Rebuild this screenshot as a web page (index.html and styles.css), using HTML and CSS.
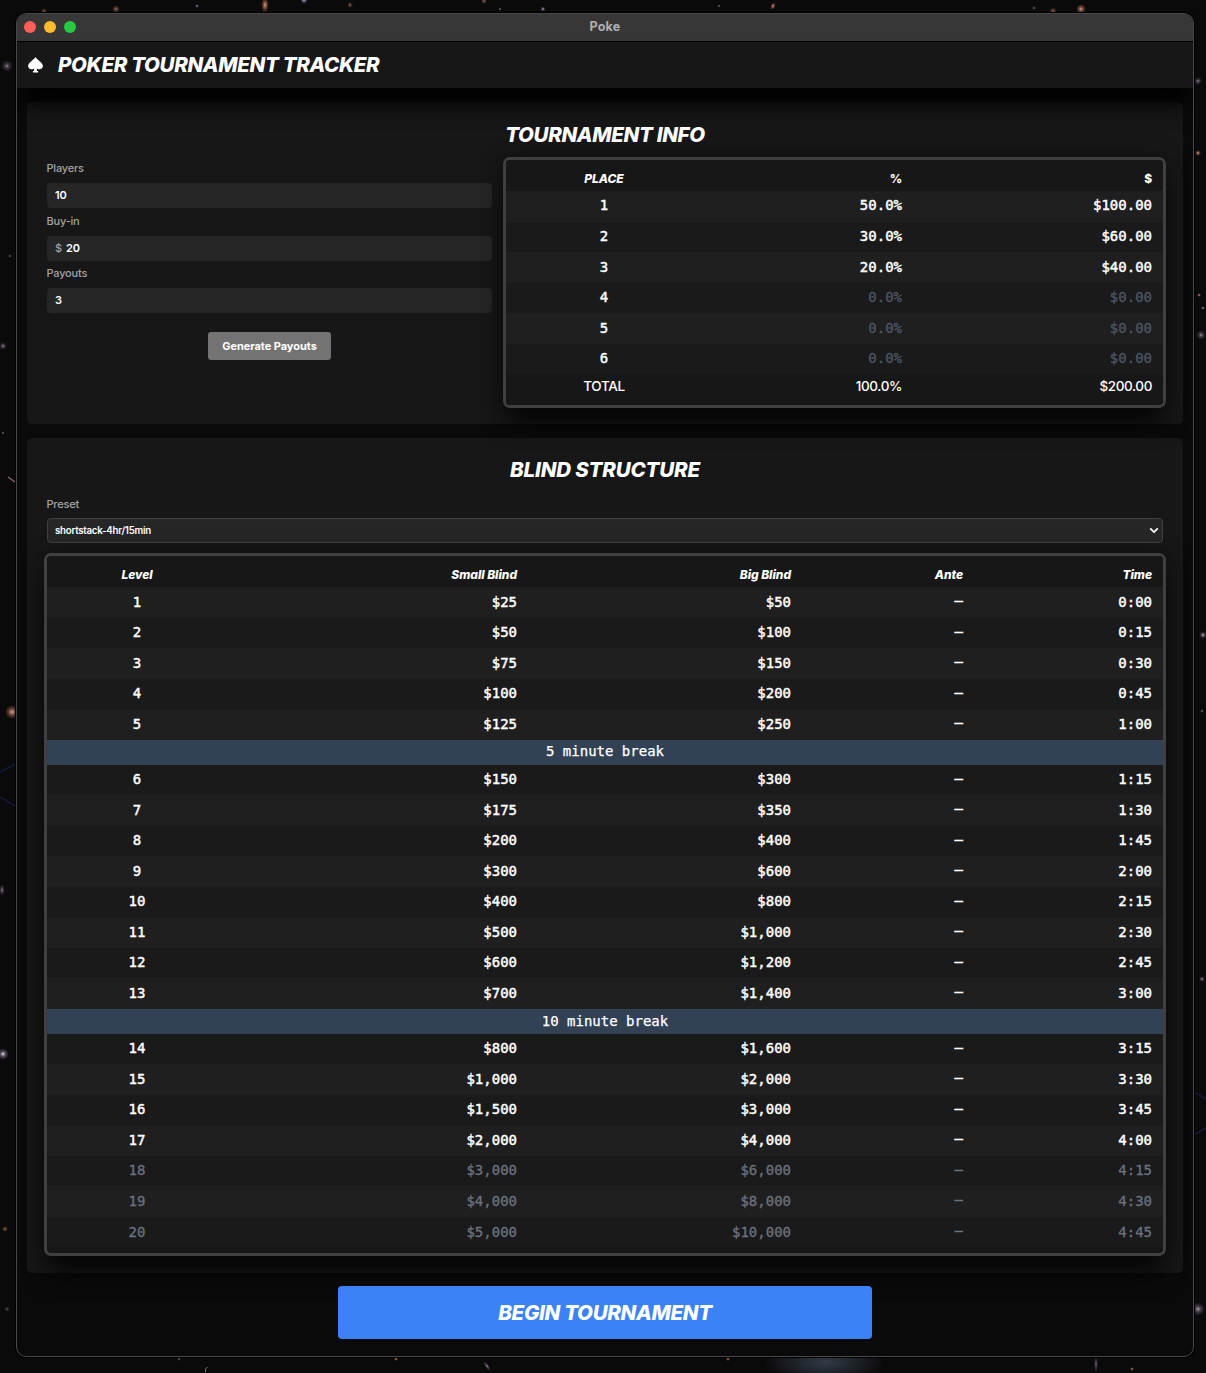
FILE: index.html
```html
<!DOCTYPE html>
<html lang="en">
<head>
<meta charset="utf-8">
<title>Poke</title>
<link rel="stylesheet" href="styles.css">
</head>
<body>
<svg class="stars" width="1206" height="1373" viewBox="0 0 1206 1373" aria-hidden="true">
  <defs>
    <radialGradient id="nebula"><stop offset="0" stop-color="#3a4856" stop-opacity=".8"/><stop offset="1" stop-color="#3a4856" stop-opacity="0"/></radialGradient>
    <radialGradient id="glow"><stop offset="0" stop-color="#fff"/><stop offset=".3" stop-color="#a08aa5" stop-opacity=".7"/><stop offset="1" stop-color="#604a70" stop-opacity="0"/></radialGradient>
    <radialGradient id="warm"><stop offset="0" stop-color="#d9a58c"/><stop offset=".4" stop-color="#8d5a48" stop-opacity=".8"/><stop offset="1" stop-color="#70402c" stop-opacity="0"/></radialGradient>
  </defs>
  <ellipse cx="825" cy="1362" rx="60" ry="22" fill="url(#nebula)"/>
  <g fill="url(#glow)">
    <circle cx="7" cy="66" r="6" opacity=".55"/><circle cx="3" cy="346" r="4" opacity=".6"/><circle cx="197" cy="6" r="2"/>
    <circle cx="3" cy="1054" r="6"/><circle cx="1198" cy="1309" r="7" opacity=".7"/><circle cx="1203" cy="635" r="4" opacity=".8"/>
    <ellipse cx="2" cy="890" rx="3" ry="6" opacity=".6"/><ellipse cx="487" cy="1366" rx="2" ry="6" transform="rotate(-35 487 1366)" opacity=".7"/>
    <ellipse cx="1096" cy="1364" rx="2" ry="9" opacity=".6"/><circle cx="304" cy="0" r="4"/><circle cx="1203" cy="308" r="2"/>
    <circle cx="1198" cy="81" r="4" opacity=".6"/><circle cx="1201" cy="335" r="5" opacity=".6"/>
    <circle cx="543" cy="9" r="2.500"/><circle cx="500" cy="9" r="1.500"/><circle cx="719" cy="6" r="1.500"/><circle cx="1034" cy="8" r="2" opacity=".7"/>
    <circle cx="3" cy="433" r="1.500"/><circle cx="1202" cy="979" r="3" opacity=".7"/><circle cx="1202" cy="711" r="2" opacity=".7"/>
    <circle cx="179" cy="1359" r="2" opacity=".7"/><circle cx="7" cy="1309" r="3" opacity=".4"/><circle cx="10" cy="256" r="2" opacity=".6"/>
  </g>
  <g fill="url(#warm)">
    <ellipse cx="265" cy="5" rx="4" ry="8"/><circle cx="12" cy="712" r="7"/><circle cx="116" cy="9" r="4" opacity=".7"/>
    <circle cx="1081" cy="9" r="5"/><circle cx="1053" cy="11" r="4" opacity=".6"/><circle cx="1198" cy="153" r="3"/>
    <circle cx="350" cy="5" r="3" opacity=".6"/><circle cx="1199" cy="295" r="2"/><circle cx="44" cy="11" r="3" opacity=".6"/>
    <ellipse cx="773" cy="6" rx="2.500" ry="4" transform="rotate(25 773 6)"/><circle cx="484" cy="1" r="3" opacity=".7"/>
    <circle cx="396" cy="1359" r="2"/><circle cx="728" cy="1359" r="2"/><circle cx="5" cy="1229" r="3" opacity=".7"/><circle cx="1132" cy="1369" r="2"/>
  </g>
  <path d="M0 772l15-8M0 797l15 9M1196 1093l10 6M1196 1134l10-6" stroke="#15193d" stroke-width="1.500"/>
  <path d="M8 477l7 5" stroke="#8d6670" stroke-width="1.200"/>
  <path d="M205.500 1372v-3l2-2" stroke="#777" fill="none"/>
</svg>
<main class="window">
  <div class="titlebar">
    <span class="light red"></span><span class="light yellow"></span><span class="light green"></span>
    <span class="window-name">Poke</span>
  </div>
  <header class="app-header">
    <svg class="spade" width="16" height="16" viewBox="0 0 16 16" aria-hidden="true"><path d="M7.500 0C6.300 2.800.1 5.300.1 9.100c0 3 3.700 4.300 6 2.300v2.600H4.900v1.500h5.200V14H8.900v-2.600c2.300 2 6 .7 6-2.300C14.900 5.300 8.700 2.800 7.500 0z" fill="#fff"/></svg>
    <h1>POKER TOURNAMENT TRACKER</h1>
  </header>

  <section class="card info">
    <h2>TOURNAMENT INFO</h2>
    <div class="info-body">
      <div class="form">
        <label>Players</label><div class="field">10</div>
        <label>Buy-in</label><div class="field"><span class="unit">$</span>20</div>
        <label>Payouts</label><div class="field">3</div>
        <button class="generate">Generate Payouts</button>
      </div>
      <div class="grid payouts">
        <div class="row head"><span>PLACE</span><span>%</span><span>$</span></div>
        <div class="row odd"><span>1</span><span>50.0%</span><span>$100.00</span></div>
        <div class="row"><span>2</span><span>30.0%</span><span>$60.00</span></div>
        <div class="row odd"><span>3</span><span>20.0%</span><span>$40.00</span></div>
        <div class="row unpaid"><span>4</span><span>0.0%</span><span>$0.00</span></div>
        <div class="row odd unpaid"><span>5</span><span>0.0%</span><span>$0.00</span></div>
        <div class="row unpaid"><span>6</span><span>0.0%</span><span>$0.00</span></div>
        <div class="row total"><span>TOTAL</span><span>100.0%</span><span>$200.00</span></div>
      </div>
    </div>
  </section>

  <section class="card blinds">
    <h2>BLIND STRUCTURE</h2>
    <label>Preset</label>
    <div class="field select">shortstack-4hr/15min<svg width="10" height="7" viewBox="0 0 10 7" aria-hidden="true"><path d="M1.200 1.300L5 5l3.800-3.700" fill="none" stroke="#fff" stroke-width="1.700"/></svg></div>
    <div class="grid levels">
      <div class="row head"><span>Level</span><span>Small Blind</span><span>Big Blind</span><span>Ante</span><span>Time</span></div>
      <div class="row odd"><span>1</span><span>$25</span><span>$50</span><span>–</span><span>0:00</span></div>
      <div class="row"><span>2</span><span>$50</span><span>$100</span><span>–</span><span>0:15</span></div>
      <div class="row odd"><span>3</span><span>$75</span><span>$150</span><span>–</span><span>0:30</span></div>
      <div class="row"><span>4</span><span>$100</span><span>$200</span><span>–</span><span>0:45</span></div>
      <div class="row odd"><span>5</span><span>$125</span><span>$250</span><span>–</span><span>1:00</span></div>
      <div class="break">5 minute break</div>
      <div class="row"><span>6</span><span>$150</span><span>$300</span><span>–</span><span>1:15</span></div>
      <div class="row odd"><span>7</span><span>$175</span><span>$350</span><span>–</span><span>1:30</span></div>
      <div class="row"><span>8</span><span>$200</span><span>$400</span><span>–</span><span>1:45</span></div>
      <div class="row odd"><span>9</span><span>$300</span><span>$600</span><span>–</span><span>2:00</span></div>
      <div class="row"><span>10</span><span>$400</span><span>$800</span><span>–</span><span>2:15</span></div>
      <div class="row odd"><span>11</span><span>$500</span><span>$1,000</span><span>–</span><span>2:30</span></div>
      <div class="row"><span>12</span><span>$600</span><span>$1,200</span><span>–</span><span>2:45</span></div>
      <div class="row odd"><span>13</span><span>$700</span><span>$1,400</span><span>–</span><span>3:00</span></div>
      <div class="break long">10 minute break</div>
      <div class="row"><span>14</span><span>$800</span><span>$1,600</span><span>–</span><span>3:15</span></div>
      <div class="row odd"><span>15</span><span>$1,000</span><span>$2,000</span><span>–</span><span>3:30</span></div>
      <div class="row"><span>16</span><span>$1,500</span><span>$3,000</span><span>–</span><span>3:45</span></div>
      <div class="row odd"><span>17</span><span>$2,000</span><span>$4,000</span><span>–</span><span>4:00</span></div>
      <div class="row late"><span>18</span><span>$3,000</span><span>$6,000</span><span>–</span><span>4:15</span></div>
      <div class="row odd late"><span>19</span><span>$4,000</span><span>$8,000</span><span>–</span><span>4:30</span></div>
      <div class="row late"><span>20</span><span>$5,000</span><span>$10,000</span><span>–</span><span>4:45</span></div>
    </div>
  </section>
  <button class="begin">BEGIN TOURNAMENT</button>
</main>
</body>
</html>
```
FILE: styles.css
```css
* { box-sizing: border-box; }
body {
  margin: 0;
  height: 1373px;
  padding: 13px 12px 16px 16px;
  overflow: hidden;
  background: #0b0a0b;
  color: #fff;
  font-family: Inter, "Liberation Sans", sans-serif;
  font-optical-sizing: none;
}
.stars { position: absolute; inset: 0; z-index: -1; }
h1, h2 {
  margin: 0;
  font-size: 20.500px;
  font-weight: 760;
  font-style: italic;
  letter-spacing: -0.320px;
  line-height: 28px;
}
button { border: 0; padding: 0; color: #fff; font-family: inherit; }

.window {
  height: 1344px;
  border: 1px solid #484848;
  border-radius: 10px;
  background: #0a0a0a;
  overflow: hidden;
  box-shadow: 0 0 0 1px #000;
}
.titlebar {
  height: 28px;
  margin-top: -1px;
  padding-left: 7px;
  display: grid;
  grid-template-columns: 12px 12px 12px 1fr;
  column-gap: 8px;
  align-items: center;
  background: #373737;
  border-top: 1px solid #686868;
}
.light { width: 12px; height: 12px; margin-top: -1px; border-radius: 50%; }
.red { background: #ff5f57; }
.yellow { background: #febc2e; }
.green { background: #28c840; }
.window-name {
  padding: 0 67px 2px 0;
  text-align: center;
  font-size: 12.500px;
  font-weight: 700;
  letter-spacing: .2px;
  color: #b0b0b0;
}
.app-header {
  position: relative;
  z-index: 2;
  height: 47px;
  display: flex;
  align-items: center;
  gap: 14px;
  padding-left: 11px;
  border-top: 1px solid #000;
  background: #171717;
  box-shadow: 0 20px 25px -5px #000;
}

.card { margin: 14px 10px 0; padding: 18px 20px 0; border-radius: 5px; background: #171717; }
.card h2 { text-align: center; }
.info { height: 322px; }
.blinds { height: 835px; }
.info h2 { padding-top: 1px; margin-bottom: -1px; }
.blinds h2 { letter-spacing: -0.15px; }
label {
  display: block;
  height: 16px;
  margin-left: -0.5px;
  line-height: 14px;
  font-size: 11px;
  font-weight: 500;
  letter-spacing: -0.2px;
  color: #a3a3a3;
}
.field {
  height: 25px;
  padding-left: 8px;
  border-radius: 4px;
  background: #262626;
  font-size: 11px;
  font-weight: 600;
  letter-spacing: -0.1px;
  line-height: 25px;
}
.unit { margin-right: 4px; color: #9ca3af; font-weight: 500; }

.info-body { display: grid; grid-template-columns: 445px 663px; gap: 11px; margin: 9px -3px 0 0; }
.form { padding-top: 4px; text-align: left; }
.form .field { margin: 6px 0 5.700px; }
.generate {
  display: block;
  width: 123px;
  height: 28px;
  margin: 19px auto 0;
  border-radius: 3px;
  background: #737373;
  font-size: 11px;
  font-weight: 740;
  letter-spacing: -0.05px;
}
.grid {
  border: 3px solid #404040;
  border-radius: 7px;
  background: #171717;
  box-shadow: 0 20px 25px -5px rgba(0, 0, 0, .8), 0 0 22px rgba(0, 0, 0, .3);
  font-family: "DejaVu Sans Mono", monospace;
  font-size: 14px;
  overflow: hidden;
}
.row {
  display: grid;
  height: 30.530px;
  line-height: 29px;
  background: #1a1a1a;
  -webkit-text-stroke: .45px #fff;
}
.row span { padding-right: 11px; text-align: right; }
.row span:first-child { padding: 0; text-align: center; }
.payouts { height: 251px; }
.payouts .row { grid-template-columns: 196px 211px 250px; }
.levels .row { grid-template-columns: 180px 301px 274px 172px 189px; }
.row.odd { line-height: 30px; background: #1f1f1f; }
.payouts .row:nth-child(2) { line-height: 29px; }
.levels .row:last-child { line-height: 30px; }
.levels .row:not(.head) span:nth-child(4) { line-height: 26px; }
.grid .row.head {
  height: 31px;
  line-height: 37px;
  background: #171717;
  font-family: Inter, sans-serif;
  font-size: 12px;
  font-style: italic;
  font-weight: 780;
  letter-spacing: -0.05px;
  -webkit-text-stroke: 0;
}
.payouts .head span:not(:first-child) { font-style: normal; }
.unpaid span:not(:first-child) { color: #4b5563; -webkit-text-stroke: .35px #4b5563; }
.row.late { color: #6b7280; -webkit-text-stroke: .3px #6b7280; }
.row.total {
  line-height: 24px;
  background: #171717;
  font-family: Inter, sans-serif;
  font-weight: 500;
  font-size: 13.500px;
  letter-spacing: -0.38px;
  -webkit-text-stroke: 0;
}

.blinds label { margin-top: 13px; }
.select {
  display: flex;
  justify-content: space-between;
  align-items: center;
  margin: 5px 0 10px;
  padding: 0 3px 0 7px;
  border: 1px solid #404040;
  font-size: 9.700px;
  letter-spacing: -0.250px;
}
.levels { height: 703px; margin: 0 -3px; }
.break {
  height: 25px;
  line-height: 23px;
  background: #334155;
  text-align: center;
  -webkit-text-stroke: .25px #fff;
}
.break.long { line-height: 24px; }
.begin {
  display: block;
  width: 534px;
  height: 53px;
  margin: 13px auto 0;
  border-radius: 4px;
  background: #3b82f6;
  font-size: 20.500px;
  font-weight: 760;
  font-style: italic;
  letter-spacing: -0.300px;
}
```
